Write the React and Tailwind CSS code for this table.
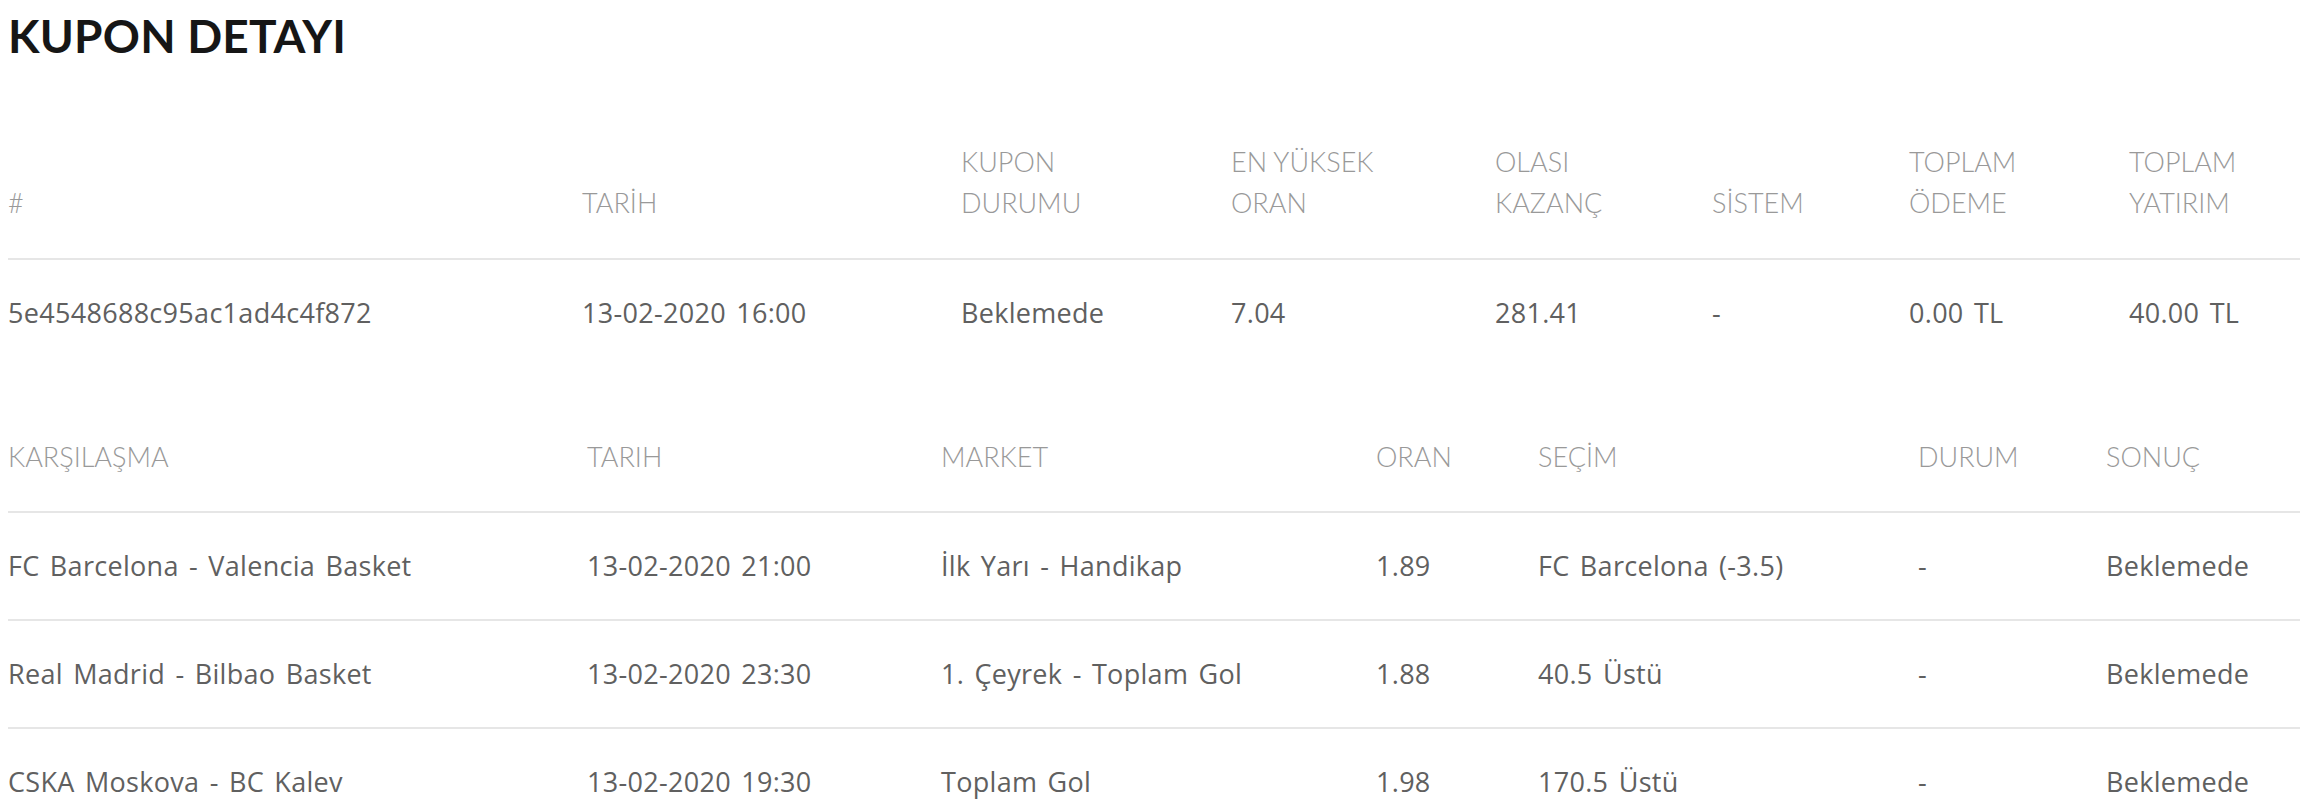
import React from "react";

const t1Cols = "grid grid-cols-[574px_379px_270px_264px_217px_197px_220px_171px]";
const t2Cols = "grid grid-cols-[579px_354px_435px_162px_380px_188px_194px]";

const t1Heads = [["#"], ["TARİH"], ["KUPON", "DURUMU"], ["EN YÜKSEK", "ORAN"], ["OLASI", "KAZANÇ"], ["SİSTEM"], ["TOPLAM", "ÖDEME"], ["TOPLAM", "YATIRIM"]];
const t1Row = ["5e4548688c95ac1ad4c4f872", "13-02-2020 16:00", "Beklemede", "7.04", "281.41", "-", "0.00 TL", "40.00 TL"];

const t2Heads = ["KARŞILAŞMA", "TARIH", "MARKET", "ORAN", "SEÇİM", "DURUM", "SONUÇ"];
const t2Rows = [
  ["FC Barcelona - Valencia Basket", "13-02-2020 21:00", "İlk Yarı - Handikap", "1.89", "FC Barcelona (-3.5)", "-", "Beklemede"],
  ["Real Madrid - Bilbao Basket", "13-02-2020 23:30", "1. Çeyrek - Toplam Gol", "1.88", "40.5 Üstü", "-", "Beklemede"],
  ["CSKA Moskova - BC Kalev", "13-02-2020 19:30", "Toplam Gol", "1.98", "170.5 Üstü", "-", "Beklemede"],
];

const headCls = "text-[27px] leading-[41px] font-light text-[#999999] font-[family-name:Lato,sans-serif]";
const cellCls = "text-[27px] leading-[41px] font-normal text-[#606060] whitespace-nowrap tracking-[0.3px] [word-spacing:3px] font-[family-name:'Open_Sans',sans-serif]";

export default function App() {
  return (
    <div className="w-[2312px] h-[804px] overflow-hidden bg-white pl-[8px] pr-[12px] font-[family-name:Lato,sans-serif]">
      <h1 className="mt-[8px] text-[46px] leading-[55px] font-bold text-[#161616] tracking-[0.2px]">KUPON DETAYI</h1>

      <div className="mt-[45px]">
        <div className={`${t1Cols} items-end border-b-2 border-[#e6e6e6]`}>
          {t1Heads.map((h, i) => (
            <div key={i} className={`pt-[33px] pb-[35px] ${headCls}`}>
              {h.map((l, j) => (
                <div key={j}>{l}</div>
              ))}
            </div>
          ))}
        </div>
        <div className={t1Cols}>
          {t1Row.map((c, i) => (
            <div key={i} className={`pt-[32px] pb-[33px] ${cellCls}`}>
              {c}
            </div>
          ))}
        </div>
      </div>

      <div className="mt-[37px]">
        <div className={`${t2Cols} border-b-2 border-[#e6e6e6]`}>
          {t2Heads.map((h, i) => (
            <div key={i} className={`pt-[33px] pb-[34px] ${headCls}`}>
              {h}
            </div>
          ))}
        </div>
        {t2Rows.map((r, ri) => (
          <div key={ri} className={`${t2Cols} border-b-2 border-[#e6e6e6]`}>
            {r.map((c, i) => (
              <div key={i} className={`pt-[32px] pb-[33px] ${cellCls}`}>
                {c}
              </div>
            ))}
          </div>
        ))}
      </div>
    </div>
  );
}
